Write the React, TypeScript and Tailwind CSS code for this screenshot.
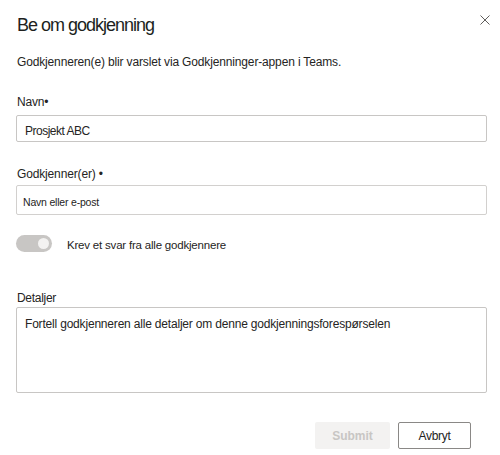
import React from 'react';

export default function App() {
  return (
    <div className="w-[500px] h-[455px] bg-white text-[#252423] font-['Liberation_Sans',Arial,sans-serif] relative">
      <button className="absolute right-[10px] top-[15px] w-[10px] h-[10px] text-[#605e5c]" aria-label="Lukk">
        <svg viewBox="0 0 10 10" className="w-[10px] h-[10px]" fill="none" stroke="currentColor" strokeWidth="1">
          <path d="M0.5 0.5L9.5 9.5M9.5 0.5L0.5 9.5" />
        </svg>
      </button>
      <div className="px-4 pt-[13px] flex flex-col">
        <h1 className="pl-px text-[18px] leading-[24px] tracking-[-1px] text-[#201f1e]">Be om godkjenning</h1>
        <p className="pl-px mt-[17px] text-[12px] leading-[16px] tracking-[-0.15px]">
          Godkjenneren(e) blir varslet via Godkjenninger-appen i Teams.
        </p>

        <label className="pl-px mt-[24px] text-[12px] leading-[16px] tracking-[-0.2px]">Navn•</label>
        <div className="mt-[5px] w-[471px] h-[27px] border border-[#c8c6c4] rounded-[2px] flex items-center px-2 pt-[4px] text-[12px] tracking-[-0.5px]">
          Prosjekt ABC
        </div>

        <label className="pl-px mt-[24px] text-[12px] leading-[16px] tracking-[-0.15px]">Godkjenner(er) •</label>
        <div className="mt-[3px] w-[471px] h-[30px] border border-[#d2d0ce] rounded-[2px] flex items-center px-[6px] pt-[6px] text-[10.5px] tracking-[-0.2px]">
          Navn eller e-post
        </div>

        <div className="mt-[18px] flex items-center gap-[15px]">
          <div className="w-[36px] h-[17px] rounded-full bg-[#c8c6c4] flex items-center justify-end pr-[3px]">
            <div className="w-[11px] h-[11px] rounded-full bg-[#f3f2f1]" />
          </div>
          <span className="mt-[4px] text-[11.5px] tracking-[-0.2px]">Krev et svar fra alle godkjennere</span>
        </div>

        <label className="pl-px mt-[36px] text-[12px] leading-[16px] tracking-[-0.3px]">Detaljer</label>
        <div className="mt-[1px] w-[471px] h-[86px] border border-[#c8c6c4] rounded-[2px] px-2 pt-[8px] text-[12px] leading-[16px] tracking-[-0.19px]">
          Fortell godkjenneren alle detaljer om denne godkjenningsforespørselen
        </div>

        <div className="mt-[29px] flex justify-end gap-2 pr-[13px]">
          <button className="w-[75px] h-[27px] rounded-[2px] bg-[#f3f2f1] text-[#c8c6c4] text-[12px] font-bold">Submit</button>
          <button className="w-[73px] h-[27px] rounded-[2px] border border-[#8a8886] bg-white text-[12px] tracking-[-0.3px]">Avbryt</button>
        </div>
      </div>
    </div>
  );
}
